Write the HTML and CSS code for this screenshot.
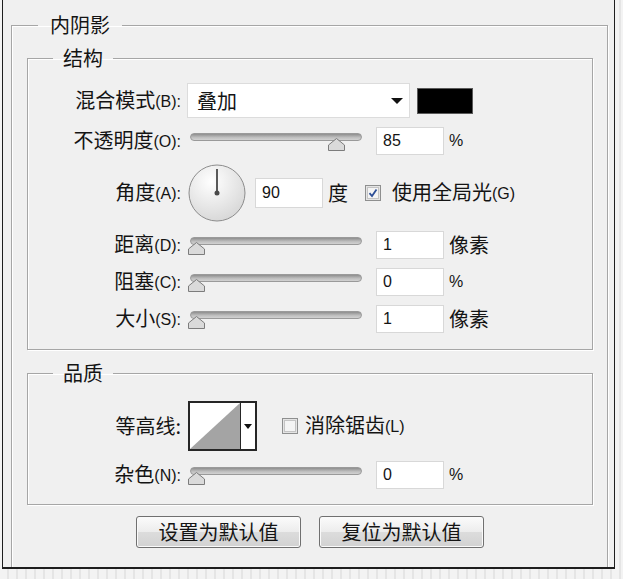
FILE: index.html
```html
<!DOCTYPE html>
<html lang="zh-CN">
<head>
  <meta charset="UTF-8" />
  <title>内阴影</title>
  <link rel="stylesheet" href="styles.css">
</head>
<body>

  <div class="window">
    <fieldset class="group group-outer">
      <legend>内阴影</legend>

      <fieldset class="group group-inner">
        <legend>结构</legend>
        <div class="rows structure">

          <div class="row row-blend">
            <span class="label">混合模式<span class="key">(B):</span></span>
            <div class="select">
              <span>叠加</span>
              <span class="arrow"></span>
            </div>
            <div class="swatch"></div>
          </div>

          <div class="row">
            <span class="label">不透明度<span class="key">(O):</span></span>
            <div class="slider">
              <div class="track"></div>
              <svg class="thumb" style="left: 80%" width="19" height="15" viewBox="0 0 19 15"><path d="M1.5 13.5V8L9.5 1.5L17.5 8V13.5Z" fill="#dadada" stroke="#7c7c7c"/></svg>
            </div>
            <input class="field" type="text" value="85">
            <span class="unit unit-latin">%</span>
          </div>

          <div class="row row-angle">
            <span class="label">角度<span class="key">(A):</span></span>
            <svg class="dial" width="58" height="58" viewBox="0 0 58 58">
              <defs>
                <radialGradient id="dialFill" cx="40%" cy="30%" r="75%">
                  <stop offset="0" stop-color="#ffffff"/>
                  <stop offset="1" stop-color="#d6d6d6"/>
                </radialGradient>
              </defs>
              <circle cx="29" cy="29" r="28" fill="url(#dialFill)" stroke="#8c8c8c"/>
              <line x1="29" y1="5" x2="29" y2="29" stroke="#5a5a5a" stroke-width="2"/>
              <circle cx="29" cy="29" r="2.5" fill="#4a4a4a"/>
            </svg>
            <input class="field field-angle" type="text" value="90">
            <span class="unit">度</span>
            <svg class="check" width="16" height="16" viewBox="0 0 16 16">
              <rect x="0.5" y="0.5" width="15" height="15" fill="#e4e4e4" stroke="#8e8f8f"/>
              <rect x="2.5" y="2.5" width="11" height="11" fill="#f4f4f4" stroke="#c4c4c4"/>
              <path d="M4.5 8.2L7 11L11.5 4.5" fill="none" stroke="#2d4f97" stroke-width="1.8"/>
            </svg>
            <span class="check-label">使用全局光<span class="key">(G)</span></span>
          </div>

          <div class="row">
            <span class="label">距离<span class="key">(D):</span></span>
            <div class="slider">
              <div class="track"></div>
              <svg class="thumb" style="left: 0" width="19" height="15" viewBox="0 0 19 15"><path d="M1.5 13.5V8L9.5 1.5L17.5 8V13.5Z" fill="#dadada" stroke="#7c7c7c"/></svg>
            </div>
            <input class="field" type="text" value="1">
            <span class="unit">像素</span>
          </div>

          <div class="row">
            <span class="label">阻塞<span class="key">(C):</span></span>
            <div class="slider">
              <div class="track"></div>
              <svg class="thumb" style="left: 0" width="19" height="15" viewBox="0 0 19 15"><path d="M1.5 13.5V8L9.5 1.5L17.5 8V13.5Z" fill="#dadada" stroke="#7c7c7c"/></svg>
            </div>
            <input class="field" type="text" value="0">
            <span class="unit unit-latin">%</span>
          </div>

          <div class="row">
            <span class="label">大小<span class="key">(S):</span></span>
            <div class="slider">
              <div class="track"></div>
              <svg class="thumb" style="left: 0" width="19" height="15" viewBox="0 0 19 15"><path d="M1.5 13.5V8L9.5 1.5L17.5 8V13.5Z" fill="#dadada" stroke="#7c7c7c"/></svg>
            </div>
            <input class="field" type="text" value="1">
            <span class="unit">像素</span>
          </div>

        </div>
      </fieldset>

      <fieldset class="group group-inner group-quality">
        <legend>品质</legend>
        <div class="rows quality">

          <div class="row row-contour">
            <span class="label">等高线:</span>
            <div class="contour">
              <svg width="50" height="46" viewBox="0 0 50 46">
                <rect width="50" height="46" fill="#fff"/>
                <path d="M0 46L50 0V46Z" fill="#a4a4a4"/>
              </svg>
              <div class="contour-drop"><span class="arrow arrow-small"></span></div>
            </div>
            <svg class="check check-quality" width="16" height="16" viewBox="0 0 16 16">
              <rect x="0.5" y="0.5" width="15" height="15" fill="#e4e4e4" stroke="#8e8f8f"/>
              <rect x="2.5" y="2.5" width="11" height="11" fill="#f4f4f4" stroke="#c4c4c4"/>
            </svg>
            <span class="check-label check-label-quality">消除锯齿<span class="key">(L)</span></span>
          </div>

          <div class="row">
            <span class="label">杂色<span class="key">(N):</span></span>
            <div class="slider">
              <div class="track"></div>
              <svg class="thumb" style="left: 0" width="19" height="15" viewBox="0 0 19 15"><path d="M1.5 13.5V8L9.5 1.5L17.5 8V13.5Z" fill="#dadada" stroke="#7c7c7c"/></svg>
            </div>
            <input class="field" type="text" value="0">
            <span class="unit unit-latin">%</span>
          </div>

        </div>
      </fieldset>

      <div class="buttons">
        <button class="button">设置为默认值</button>
        <button class="button">复位为默认值</button>
      </div>
    </fieldset>
  </div>

</body>
</html>
```

FILE: styles.css
```css
body {
    margin: 0;
    height: 579px;
    overflow: hidden;
    font-family: "Noto Sans CJK SC", sans-serif;
    color: #141414;
    background: repeating-linear-gradient(90deg, #f3f3f3 0, #f3f3f3 7px, #e5e5e5 7px, #e5e5e5 9px);
}

.window {
    box-sizing: border-box;
    width: 613px;
    height: 569px;
    margin-left: 2px;
    padding-top: 13px;
    background-color: #f0f0f0;
    border: solid #1e1e1e;
    border-width: 0 1px 2px 1px;
    overflow: hidden;
}

.group {
    box-sizing: border-box;
    min-width: 0;
    margin: 0;
    padding: 0;
    border: 1px solid #a6a6a6;
    box-shadow: 1px 1px 0 #ffffff, inset 1px 1px 0 #ffffff;
}

.group > legend {
    font-size: 20px;
    line-height: 24px;
    padding: 0 10px;
    margin-left: 25px;
}

.group-outer {
    width: 597px;
    margin-left: 8px;
    padding: 9px 14px 60px 15px;
}

.group-outer > legend {
    padding: 0 12px;
    margin-left: 11px;
}

.group-inner {
    width: 566px;
}

.group-quality {
    margin-top: 11px;
}

.rows {
    display: flex;
    flex-direction: column;
    gap: 9px;
}

.structure {
    padding: 13px 0 16px;
}

.quality {
    gap: 10px;
    padding: 16px 0 15px;
}

.row {
    display: flex;
    align-items: center;
    height: 28px;
}

.row-blend {
    height: 35px;
}

.row-angle {
    height: 58px;
}

.row-contour {
    height: 50px;
}

.label {
    flex: none;
    width: 153px;
    margin-right: 6px;
    text-align: right;
    font-size: 20px;
    line-height: 24px;
    white-space: nowrap;
}

.key {
    font-family: "Liberation Sans", sans-serif;
    font-size: 16px;
    vertical-align: 1px;
}

.select {
    box-sizing: border-box;
    display: flex;
    align-items: center;
    justify-content: space-between;
    width: 223px;
    height: 35px;
    padding: 0 6px 0 9px;
    background-color: #ffffff;
    border: 1px solid #dcdcdc;
    font-size: 20px;
}

.arrow {
    width: 0;
    height: 0;
    border-left: 6px solid transparent;
    border-right: 6px solid transparent;
    border-top: 6px solid #111111;
}

.arrow-small {
    border-left-width: 4px;
    border-right-width: 4px;
    border-top-width: 5px;
}

.swatch {
    box-sizing: border-box;
    width: 56px;
    height: 26px;
    margin-left: 7px;
    background-color: #000000;
    border: 1px solid #5a5a5a;
}

.slider {
    position: relative;
    flex: none;
    width: 175px;
    height: 19px;
    margin-top: 3px;
}

.track {
    box-sizing: border-box;
    height: 8px;
    margin-left: 3px;
    border-radius: 4px;
    background: linear-gradient(#8e8e8e, #bdbdbd 55%, #d2d2d2);
    border: 1px solid #9a9a9a;
}

.thumb {
    position: absolute;
    top: 4px;
}

.field {
    box-sizing: border-box;
    width: 68px;
    height: 28px;
    margin: 0 0 0 14px;
    padding: 0 6px;
    background-color: #ffffff;
    border: 1px solid #d8d8d8;
    outline: none;
    font-family: "Liberation Sans", sans-serif;
    font-size: 16px;
    color: #141414;
}

.unit {
    margin-left: 5px;
    font-size: 20px;
    line-height: 24px;
}

.unit-latin {
    font-family: "Liberation Sans", sans-serif;
    font-size: 16px;
}

.dial {
    flex: none;
    margin-left: 1px;
}

.field-angle {
    height: 30px;
    margin-left: 9px;
}

.check {
    flex: none;
    margin-left: 17px;
}

.check-label {
    margin-left: 11px;
    font-size: 20px;
    line-height: 24px;
}

.contour {
    box-sizing: border-box;
    display: flex;
    width: 69px;
    height: 50px;
    margin-left: 1px;
    background-color: #ffffff;
    border: 2px solid #262626;
}

.contour svg {
    display: block;
}

.contour-drop {
    flex: 1;
    display: flex;
    align-items: center;
    justify-content: center;
    border-left: 1px solid #262626;
}

.check-quality {
    margin-left: 25px;
}

.check-label-quality {
    margin-left: 7px;
}

.buttons {
    display: flex;
    justify-content: center;
    gap: 18px;
    margin-top: 11px;
}

.button {
    box-sizing: border-box;
    width: 165px;
    height: 32px;
    padding: 0;
    background: linear-gradient(#fbfbfb, #ececec 50%, #dcdcdc 51%, #d2d2d2);
    border: 1px solid #707070;
    border-radius: 3px;
    box-shadow: inset 0 0 0 1px #fafafa;
    font-family: "Noto Sans CJK SC", sans-serif;
    font-size: 20px;
    line-height: 24px;
    color: #141414;
}
```
